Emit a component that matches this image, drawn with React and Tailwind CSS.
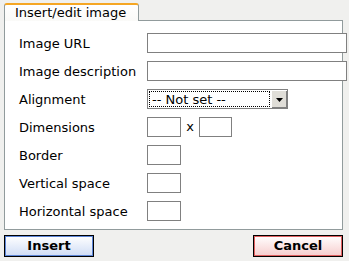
import React from "react";

const font = { fontFamily: '"DejaVu Sans", Verdana, sans-serif' };

function Box({ w }) {
  return <div className={`h-[20px] shrink-0 border border-[#808080] bg-white ${w}`} />;
}

function Row({ label, children }) {
  return (
    <div className="flex h-[20px] items-center">
      <div className="w-[128px] shrink-0 pt-[1px] text-[13px] text-black">{label}</div>
      {children}
    </div>
  );
}

export default function App() {
  return (
    <div className="flex h-[261px] w-[349px] flex-col bg-[#f0f0ee]" style={font}>
      {/* tab strip */}
      <div className="relative z-10 flex h-[20px] pl-[4px] pt-[3px]">
        <div className="h-[18px] w-[135px] rounded-tl-[3px] rounded-tr-[3px] border-x border-t-2 border-x-[#919b9c] border-t-[#f5a623] bg-gradient-to-b from-white to-[#fafaf8] pl-[10px] text-[13px] leading-[15px] text-black">
          Insert/edit image
        </div>
      </div>

      {/* panel */}
      <div className="ml-[4px] flex w-[339px] flex-col gap-[8px] border border-[#919b9c] bg-white pb-[8px] pl-[14px] pt-[12px]">
        <Row label="Image URL">
          <Box w="w-[200px]" />
        </Row>
        <Row label="Image description">
          <Box w="w-[200px]" />
        </Row>
        <Row label="Alignment">
          <div className="flex h-[20px] w-[141px] shrink-0 border border-[#808080] bg-white">
            <div className="m-[1px] flex flex-1 items-center border border-dotted border-black pl-[2px] text-[13px] leading-none text-black">
              -- Not set --
            </div>
            <div className="flex w-[16px] items-center justify-center border-l border-t border-l-white border-t-white bg-[#e0ded8] shadow-[inset_-1px_-1px_0_#808080]">
              <svg width="7" height="4" viewBox="0 0 7 4">
                <path d="M0 0H7L3.5 4Z" fill="#000" />
              </svg>
            </div>
          </div>
        </Row>
        <Row label="Dimensions">
          <Box w="w-[34px]" />
          <span className="w-[18px] text-center text-[13px] text-black">x</span>
          <Box w="w-[33px]" />
        </Row>
        <Row label="Border">
          <Box w="w-[34px]" />
        </Row>
        <Row label="Vertical space">
          <Box w="w-[34px]" />
        </Row>
        <Row label="Horizontal space">
          <Box w="w-[34px]" />
        </Row>
      </div>

      {/* buttons */}
      <div className="flex justify-between pl-[4px] pr-[6px] pt-[5px]">
        <button className="h-[22px] w-[90px] border border-black bg-gradient-to-b from-white to-[#cfdcf5] text-[13px] font-bold text-black shadow-[inset_0_0_0_1px_#5d85d6]">
          Insert
        </button>
        <button className="h-[22px] w-[90px] border border-black bg-gradient-to-b from-white to-[#f6cdcd] text-[13px] font-bold text-black shadow-[inset_0_0_0_1px_#e06060]">
          Cancel
        </button>
      </div>
    </div>
  );
}
